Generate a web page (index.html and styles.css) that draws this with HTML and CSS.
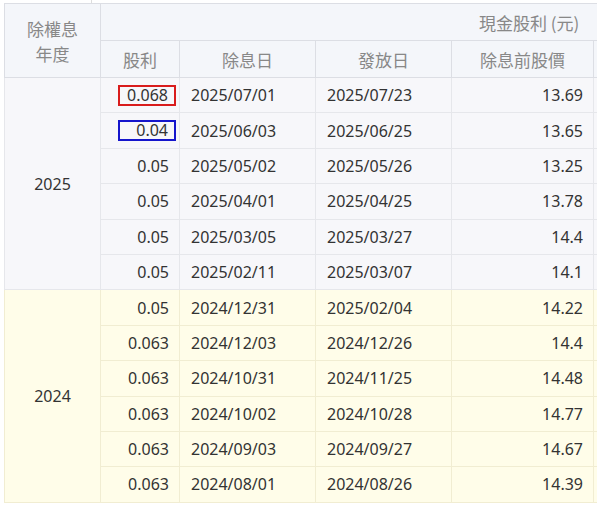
FILE: index.html
```html
<!DOCTYPE html>
<html lang="zh-Hant">
<head>
<meta charset="utf-8">
<title>現金股利</title>
<link rel="stylesheet" href="styles.css">
</head>
<body>
<div class="page">
  <div class="top-strip"></div>
  <table class="div-table">
    <colgroup>
      <col class="c-year">
      <col class="c-amt">
      <col class="c-date">
      <col class="c-date">
      <col class="c-price">
      <col class="c-more">
    </colgroup>
    <thead>
      <tr class="h1">
        <th rowspan="2" class="year-h">除權息<br>年度</th>
        <th colspan="5" class="group-h"><span class="group-label">現金股利 (元)</span></th>
      </tr>
      <tr class="h2">
        <th>股利</th>
        <th>除息日</th>
        <th>發放日</th>
        <th>除息前股價</th>
        <th></th>
      </tr>
    </thead>
    <tbody class="y2025">
      <tr><td rowspan="6" class="year">2025</td><td class="num"><span class="mark red">0.068</span></td><td class="date">2025/07/01</td><td class="date">2025/07/23</td><td class="num">13.69</td><td></td></tr>
      <tr><td class="num"><span class="mark blue">0.04</span></td><td class="date">2025/06/03</td><td class="date">2025/06/25</td><td class="num">13.65</td><td></td></tr>
      <tr><td class="num">0.05</td><td class="date">2025/05/02</td><td class="date">2025/05/26</td><td class="num">13.25</td><td></td></tr>
      <tr><td class="num">0.05</td><td class="date">2025/04/01</td><td class="date">2025/04/25</td><td class="num">13.78</td><td></td></tr>
      <tr><td class="num">0.05</td><td class="date">2025/03/05</td><td class="date">2025/03/27</td><td class="num">14.4</td><td></td></tr>
      <tr><td class="num">0.05</td><td class="date">2025/02/11</td><td class="date">2025/03/07</td><td class="num">14.1</td><td></td></tr>
    </tbody>
    <tbody class="y2024">
      <tr><td rowspan="6" class="year">2024</td><td class="num">0.05</td><td class="date">2024/12/31</td><td class="date">2025/02/04</td><td class="num">14.22</td><td></td></tr>
      <tr><td class="num">0.063</td><td class="date">2024/12/03</td><td class="date">2024/12/26</td><td class="num">14.4</td><td></td></tr>
      <tr><td class="num">0.063</td><td class="date">2024/10/31</td><td class="date">2024/11/25</td><td class="num">14.48</td><td></td></tr>
      <tr><td class="num">0.063</td><td class="date">2024/10/02</td><td class="date">2024/10/28</td><td class="num">14.77</td><td></td></tr>
      <tr><td class="num">0.063</td><td class="date">2024/09/03</td><td class="date">2024/09/27</td><td class="num">14.67</td><td></td></tr>
      <tr><td class="num">0.063</td><td class="date">2024/08/01</td><td class="date">2024/08/26</td><td class="num">14.39</td><td></td></tr>
    </tbody>
  </table>
</div>
</body>
</html>
```

FILE: styles.css
```css
html, body {
  margin: 0;
  padding: 0;
  background: #ffffff;
  overflow: hidden;
}

.page {
  width: 597px;
  height: 507px;
  overflow: hidden;
  font-family: "Noto Sans", "Noto Sans CJK TC", sans-serif;
  color: #333333;
}

.top-strip {
  height: 3px;
  margin-left: 91px;
  border-left: 1px solid #dddddd;
}

.div-table {
  margin-left: 4px;
  border-collapse: collapse;
  table-layout: fixed;
  width: 690px;
  font-size: 16px;
}

.c-year { width: 96px; }
.c-amt { width: 79px; }
.c-date { width: 136px; }
.c-price { width: 142px; }
.c-more { width: 101px; }

th, td {
  padding: 0;
  white-space: nowrap;
}

thead th {
  background: #f4f6fa;
  color: #888888;
  font-weight: normal;
  font-size: 17px;
  font-family: "Noto Sans CJK TC", "Noto Sans", sans-serif;
  border: 1px solid #dcdee4;
  height: 36px;
}

.year-h {
  line-height: 25px;
}

.group-h {
  text-align: left;
  padding-left: 378px;
}

.h2 th {
  text-align: center;
}

tbody td {
  height: 34.4px;
  line-height: 20px;
}

.y2025 td {
  background: #f7f7fa;
  border: 1px solid #e6e7eb;
}

.y2024 td {
  background: #fffde9;
  border: 1px solid #f1edd2;
}

.year {
  text-align: center;
}

.num {
  text-align: right;
  padding-right: 10px;
}

.date {
  text-align: left;
  padding-left: 11px;
}

.mark {
  display: inline-block;
  box-sizing: border-box;
  width: 58px;
  height: 21px;
  line-height: 17px;
  padding-right: 6px;
  text-align: right;
  margin-right: -7px;
}

.red { border: 2px solid #d91c1c; }
.blue { border: 2px solid #1515cc; }
```
